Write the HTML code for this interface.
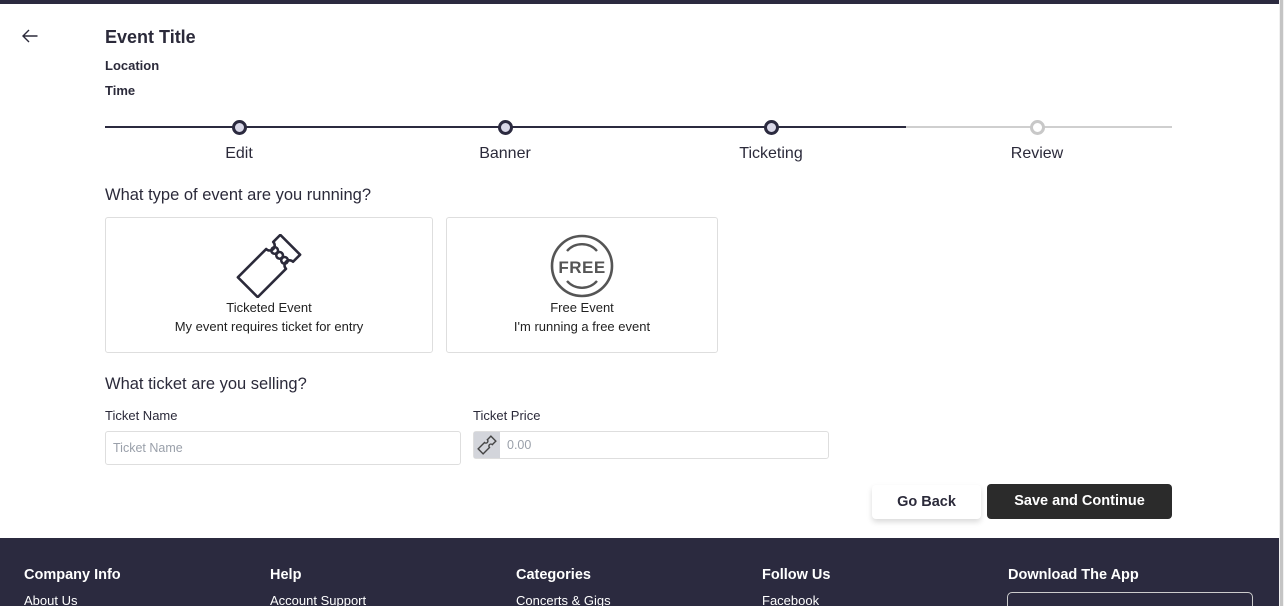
<!DOCTYPE html>
<html><head><style>
*{margin:0;padding:0;box-sizing:border-box}
body{width:1284px;height:606px;overflow:hidden;background:#fff;font-family:"Liberation Sans",sans-serif;color:#2b2a3a;position:relative}
.a{position:absolute}
.topbar{left:0;top:0;width:1279px;height:4px;background:#2b2a3f}
.sb{left:1279px;top:0;width:5px;height:606px;background:#f1f1f1}
.sb i{position:absolute;left:1px;top:0;width:3px;height:606px;background:#c4c4c4}
.b{font-weight:bold}
.dot{width:15px;height:15px;border-radius:50%;border:3px solid #2b2a3f;background:#d9d8e8}
.lbl{font-size:16px;width:120px;text-align:center;color:#2b2a3a}
.card{border:1px solid #dedede;border-radius:3px;background:#fff}
.ct{font-size:13px;text-align:center;color:#222;line-height:19px}
.inp{border:1px solid #dedede;border-radius:3px;font-size:12.5px;color:#9aa0aa}
.foot{left:0;top:538px;width:1279px;height:68px;background:#2b2a3f;color:#fff;overflow:hidden}
.fh{font-weight:bold;font-size:14.5px;top:29px}
.fl{font-size:13px;top:55px}
</style></head><body>
<div class="a topbar"></div>
<div class="a sb"><i></i></div>
<svg class="a" style="left:21px;top:28px" width="18" height="16" viewBox="0 0 18 16"><path d="M16.5 8H2M8 2L2 8l6 6" stroke="#2b2a3a" stroke-width="1.4" fill="none"/></svg>
<div class="a b" style="left:105px;top:27px;font-size:18px">Event Title</div>
<div class="a b" style="left:105px;top:58px;font-size:13px">Location</div>
<div class="a b" style="left:105px;top:83px;font-size:13px">Time</div>
<div class="a" style="left:105px;top:126px;width:801px;height:2px;background:#2b2a3f"></div>
<div class="a" style="left:906px;top:126px;width:266px;height:2px;background:#cfcfcf"></div>
<div class="a dot" style="left:232px;top:120px"></div>
<div class="a dot" style="left:498px;top:120px"></div>
<div class="a dot" style="left:764px;top:120px"></div>
<div class="a dot" style="left:1030px;top:120px;border-color:#c8c8c8;background:#fff"></div>
<div class="a lbl" style="left:179px;top:145px">Edit</div>
<div class="a lbl" style="left:445px;top:145px">Banner</div>
<div class="a lbl" style="left:711px;top:145px">Ticketing</div>
<div class="a lbl" style="left:977px;top:145px">Review</div>
<div class="a" style="left:105px;top:186px;font-size:16.5px">What type of event are you running?</div>
<div class="a card" style="left:105px;top:217px;width:328px;height:136px"></div>
<svg class="a" style="left:236px;top:234px" width="66" height="64" viewBox="0 0 66 64"><g transform="rotate(45 33 32)" fill="none" stroke="#2b2a3a" stroke-width="2.6" stroke-linejoin="round"><path d="M19 2 H47 V12 A5 5 0 0 0 47 22 V62 H19 V22 A5 5 0 0 0 19 12 Z"/><circle cx="26" cy="17" r="3.3"/><circle cx="33" cy="17" r="3.3"/><circle cx="40" cy="17" r="3.3"/></g></svg>
<div class="a ct" style="left:105px;top:298px;width:328px">Ticketed Event<br>My event requires ticket for entry</div>
<div class="a card" style="left:446px;top:217px;width:272px;height:136px"></div>
<svg class="a" style="left:549px;top:234px" width="66" height="64" viewBox="0 0 66 64"><circle cx="33" cy="32" r="30" fill="none" stroke="#555" stroke-width="2.6"/><path d="M18 17 A20 20 0 0 1 48 17 M18 47 A20 20 0 0 0 48 47" fill="none" stroke="#555" stroke-width="2.4"/><text x="33" y="39" text-anchor="middle" font-family="Liberation Sans" font-weight="bold" font-size="17" fill="#555" letter-spacing="0.5">FREE</text></svg>
<div class="a ct" style="left:446px;top:298px;width:272px">Free Event<br>I'm running a free event</div>
<div class="a" style="left:105px;top:375px;font-size:16.5px">What ticket are you selling?</div>
<div class="a" style="left:105px;top:408px;font-size:13px">Ticket Name</div>
<div class="a" style="left:473px;top:408px;font-size:13px">Ticket Price</div>
<div class="a inp" style="left:105px;top:431px;width:356px;height:34px;padding:9px 7px">Ticket Name</div>
<div class="a inp" style="left:473px;top:431px;width:356px;height:28px;padding:6px 0 0 33px">0.00</div>
<div class="a" style="left:474px;top:432px;width:26px;height:26px;background:#d3d5db"></div>
<svg class="a" style="left:477px;top:435px" width="20" height="20" viewBox="0 0 20 20"><g transform="rotate(45 10 10)" fill="none" stroke="#444" stroke-width="1.4"><path d="M6.5 1 H13.5 V6 A2 2 0 0 0 13.5 10 V19 H6.5 V10 A2 2 0 0 0 6.5 6 Z"/></g></svg>
<div class="a b" style="left:872px;top:485px;width:109px;height:34px;border-radius:4px;box-shadow:0 3px 6px rgba(0,0,0,.15);font-size:14.5px;text-align:center;line-height:34px">Go Back</div>
<div class="a b" style="left:987px;top:484px;width:185px;height:35px;border-radius:4px;background:#2b2b2b;color:#fff;font-size:14.5px;text-align:center;line-height:35px">Save and Continue</div>
<div class="a foot">
<div class="a fh" style="left:24px">Company Info</div><div class="a fl" style="left:24px">About Us</div>
<div class="a fh" style="left:270px">Help</div><div class="a fl" style="left:270px">Account Support</div>
<div class="a fh" style="left:516px">Categories</div><div class="a fl" style="left:516px">Concerts &amp; Gigs</div>
<div class="a fh" style="left:762px">Follow Us</div><div class="a fl" style="left:762px">Facebook</div>
<div class="a fh" style="left:1008px">Download The App</div>
<div class="a" style="left:1007px;top:54px;width:246px;height:30px;border:1px solid #ccc;border-radius:5px"></div>
</div>
</body></html>
